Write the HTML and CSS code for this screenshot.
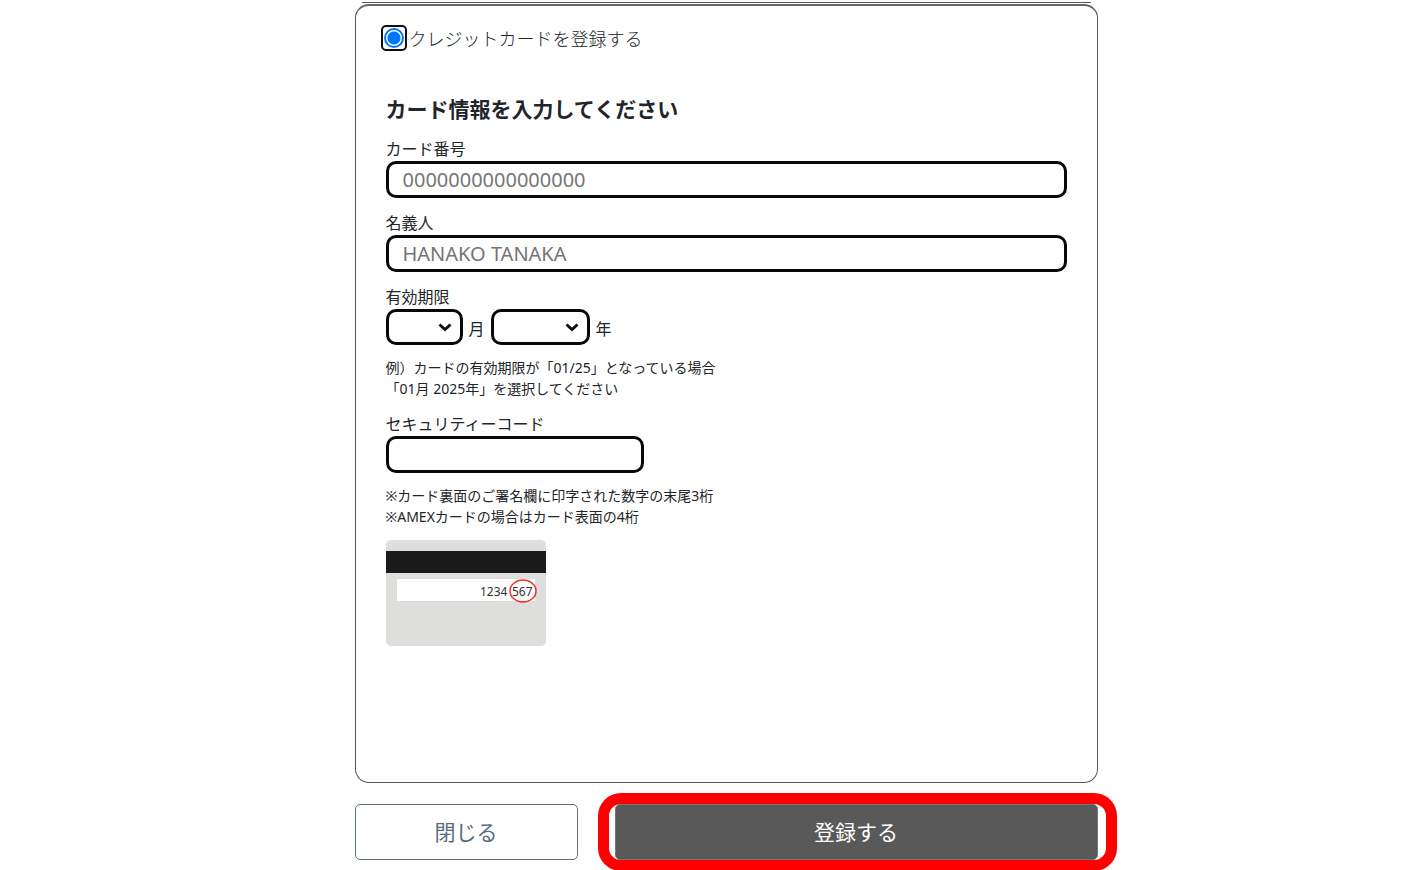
FILE: index.html
```html
<!DOCTYPE html>
<html lang="ja">
<head>
<meta charset="utf-8">
<title>クレジットカード登録</title>
<link rel="stylesheet" href="styles.css">
</head>
<body>
<form class="page">
  <div class="previous-panel"></div>
  <section class="panel">
    <div class="method">
      <span class="focus-ring"><input class="method-radio" type="radio" id="method-card" name="method" checked></span>
      <label for="method-card">クレジットカードを登録する</label>
    </div>
    <div class="fields">
      <h2 class="title">カード情報を入力してください</h2>
      <div class="field">
        <label for="number">カード番号</label>
        <input class="box" type="text" id="number" placeholder="0000000000000000">
      </div>
      <div class="field">
        <label for="holder">名義人</label>
        <input class="box" type="text" id="holder" placeholder="HANAKO TANAKA">
      </div>
      <div class="field">
        <label for="month">有効期限</label>
        <div class="expiry">
          <span class="picker">
            <select class="box month" id="month"><option></option><option>01</option></select>
            <svg class="arrow" viewBox="0 0 14 9" aria-hidden="true"><path d="M1.500 1.500 7 6.500l5.500-5"/></svg>
          </span>
          <label class="unit" for="month">月</label>
          <span class="picker">
            <select class="box year" id="year"><option></option><option>2025</option></select>
            <svg class="arrow" viewBox="0 0 14 9" aria-hidden="true"><path d="M1.500 1.500 7 6.500l5.500-5"/></svg>
          </span>
          <label class="unit" for="year">年</label>
        </div>
        <p class="note">例）カードの有効期限が「01/25」となっている場合<br>「01月 2025年」を選択してください</p>
      </div>
      <div class="field">
        <label for="code">セキュリティーコード</label>
        <input class="box code" type="text" id="code">
        <p class="note">※カード裏面のご署名欄に印字された数字の末尾3桁<br>※AMEXカードの場合はカード表面の4桁</p>
      </div>
      <svg class="card-back" viewBox="0 0 160 106" role="img" aria-label="カード裏面">
        <rect width="160" height="106" rx="5" fill="#dededc"/>
        <rect y="11" width="160" height="22" fill="#1a1a1a"/>
        <rect x="11" y="39" width="138" height="22" fill="#fff"/>
        <text x="94" y="56">1234</text>
        <text x="126" y="56">567</text>
        <ellipse cx="137" cy="51" rx="13" ry="11" fill="none" stroke="#f22b2b" stroke-width="1.500"/>
      </svg>
    </div>
  </section>
  <div class="actions">
    <button class="button close" type="button">閉じる</button>
    <button class="button submit" type="submit">登録する</button>
  </div>
</form>
</body>
</html>
```
FILE: styles.css
```css
* {
  box-sizing: border-box;
}

body {
  margin: 0;
  padding-left: 45px;
  background: #fff;
  color: #212529;
  font-family: "Noto Sans", "Noto Sans CJK JP", sans-serif;
  font-size: 16px;
  line-height: 24px;
}

input,
select,
button {
  margin: 0;
  font: inherit;
}

.page {
  max-width: 743px;
  margin: 0 auto;
  padding-top: 2px;
}

.previous-panel {
  height: 2px;
  margin: 0 7px;
  border-top: 1px solid #555;
}

.panel {
  min-height: 779px;
  padding: 19px 30px;
  border: 1px solid #555;
  border-top: 2px solid #666;
  border-radius: 14px;
}

.method {
  display: flex;
  align-items: flex-start;
  gap: 2px;
  height: 26px;
  margin-left: -5px;
  font-size: 18px;
  font-weight: 300;
  line-height: 28px;
}

.focus-ring {
  display: flex;
  align-items: center;
  justify-content: center;
  width: 26px;
  height: 26px;
  border: 2px solid #101010;
  border-radius: 5px;
}

.method-radio {
  appearance: none;
  width: 20px;
  height: 20px;
  border: 2px solid #0075ff;
  border-radius: 50%;
  background: radial-gradient(circle, #0075ff 0 6px, #fff 7px);
}

.title {
  margin: 42px 0 12px;
  font-size: 21px;
  font-weight: 700;
  line-height: 32px;
}

.field {
  display: flex;
  flex-direction: column;
  align-items: flex-start;
  margin-bottom: 13px;
}

.box {
  width: 100%;
  height: 37px;
  padding: 0 14px;
  border: 3px solid #080808;
  border-radius: 10px;
  background: #fff;
  color: #212529;
  font-size: 20px;
}

.box::placeholder {
  color: #757575;
}

.expiry {
  display: flex;
  align-items: center;
  gap: 6px;
}

.picker {
  position: relative;
  display: flex;
}

.picker .box {
  appearance: none;
  height: 36px;
}

.picker .month {
  width: 77px;
}

.picker .year {
  width: 99px;
}

.arrow {
  position: absolute;
  top: 14px;
  right: 11px;
  width: 14px;
  height: 9px;
  fill: none;
  stroke: #111;
  stroke-width: 3;
  pointer-events: none;
}

.unit {
  padding-top: 4px;
}

.code {
  width: 258px;
}

.note {
  margin: 12px 0 0;
  font-size: 14px;
  line-height: 21px;
}

.card-back {
  display: block;
  width: 160px;
  height: 106px;
  font-size: 12px;
}

.card-back text {
  fill: #333;
}

.actions {
  display: grid;
  grid-template-columns: 223px 1fr;
  gap: 37px;
  padding: 21px 0 10px;
}

.button {
  height: 56px;
  border: 1px solid #607080;
  border-radius: 5px;
  background: #fff;
  color: #5b6b7d;
  font-size: 21px;
}

.submit {
  position: relative;
  border-color: #777;
  background: #595959;
  color: #fff;
}

.submit::after {
  content: "";
  position: absolute;
  box-sizing: border-box;
  inset: -12px -20px -12px -18px;
  border: 11px solid #f00;
  border-radius: 23px;
}
```
